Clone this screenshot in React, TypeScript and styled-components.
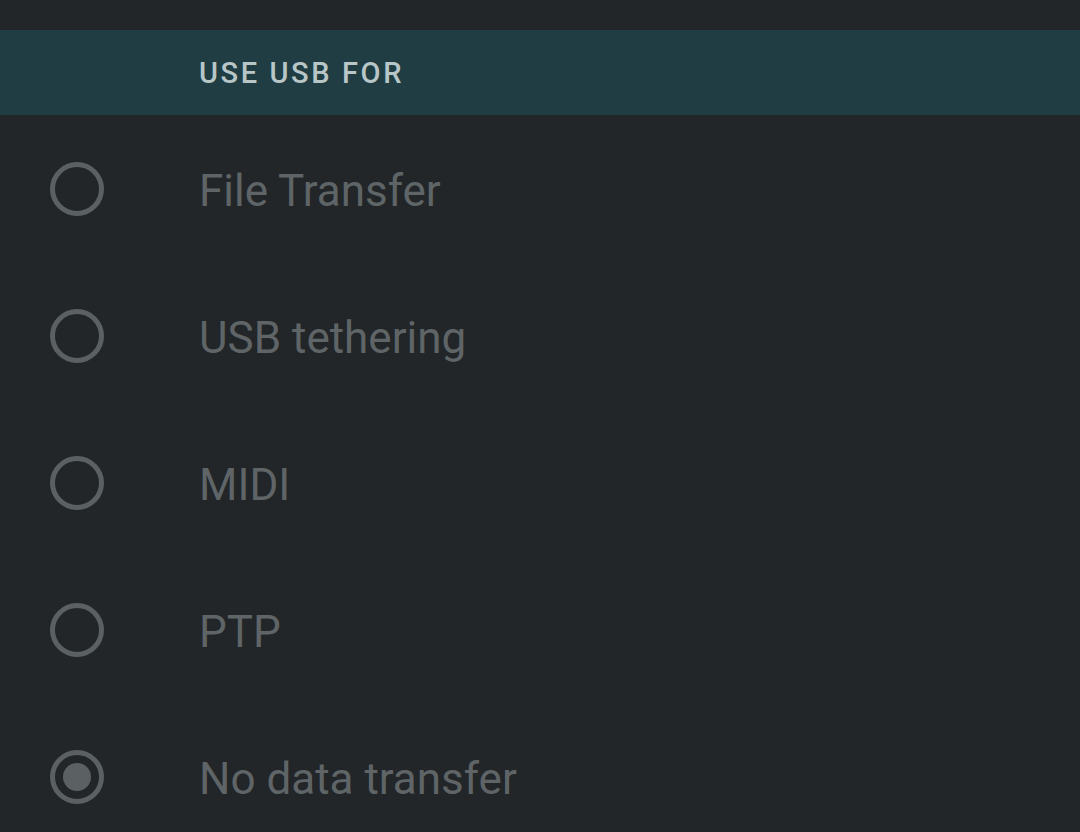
import styled, { createGlobalStyle } from 'styled-components';

const options = [
  { label: 'File Transfer', checked: false },
  { label: 'USB tethering', checked: false },
  { label: 'MIDI', checked: false },
  { label: 'PTP', checked: false },
  { label: 'No data transfer', checked: true },
];

export default function App() {
  return (
    <>
      <GlobalStyle />
      <Screen>
        <SectionHeader>USE USB FOR</SectionHeader>
        <OptionList>
          {options.map((opt) => (
            <OptionRow key={opt.label}>
              <RadioSlot>
                <Radio $checked={opt.checked} />
              </RadioSlot>
              <OptionLabel>{opt.label}</OptionLabel>
            </OptionRow>
          ))}
        </OptionList>
      </Screen>
    </>
  );
}

const GlobalStyle = createGlobalStyle`
  html, body {
    margin: 0;
    padding: 0;
    background: #222629;
  }
  body {
    font-family: Roboto, 'Liberation Sans', sans-serif;
  }
`;

const Screen = styled.div`
  width: 1080px;
  height: 832px;
  overflow: hidden;
  background: #222629;
  padding-top: 30px;
  box-sizing: border-box;
`;

const SectionHeader = styled.div`
  height: 85px;
  background: #1f3d42;
  display: flex;
  align-items: center;
  padding-left: 199px;
  color: #b8c6c8;
  font-size: 29px;
  font-weight: 500;
  letter-spacing: 2.6px;
`;

const OptionList = styled.div`
  display: flex;
  flex-direction: column;
`;

const OptionRow = styled.div`
  height: 147px;
  display: flex;
  align-items: center;
  flex-shrink: 0;
`;

const RadioSlot = styled.div`
  width: 199px;
  padding-left: 50px;
  box-sizing: border-box;
  display: flex;
  align-items: center;
`;

const Radio = styled.span<{ $checked: boolean }>`
  width: 54px;
  height: 54px;
  box-sizing: border-box;
  border-radius: 50%;
  border: 5px solid #5b6063;
  display: flex;
  align-items: center;
  justify-content: center;

  &::after {
    content: '';
    display: ${(p) => (p.$checked ? 'block' : 'none')};
    width: 28px;
    height: 28px;
    border-radius: 50%;
    background: #5b6063;
  }
`;

const OptionLabel = styled.span`
  color: #5f6467;
  font-size: 44px;
  font-weight: 400;
  margin-top: 4px;
`;
